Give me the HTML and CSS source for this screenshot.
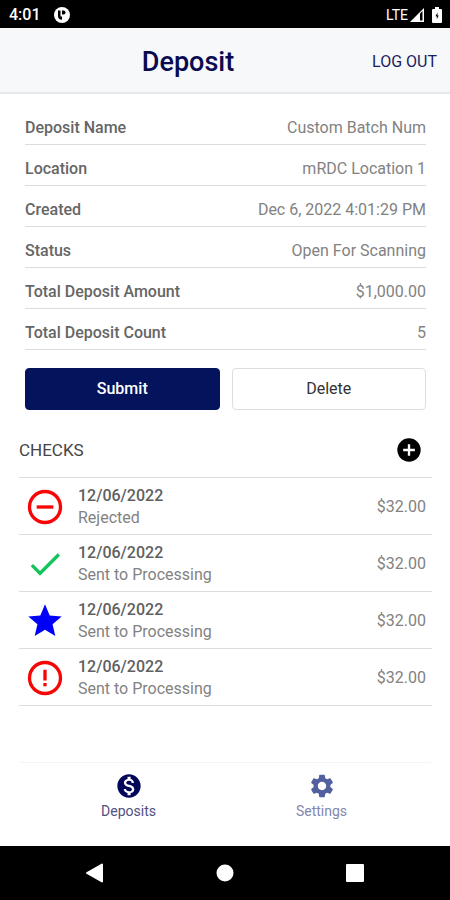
FILE: index.html
```html
<!DOCTYPE html>
<html lang="en">
<head>
<meta charset="utf-8">
<meta name="viewport" content="width=device-width, initial-scale=1">
<title>Deposit</title>
<link rel="stylesheet" href="styles.css">
</head>
<body>
<div class="status-bar">
  <span class="clock">4:01</span>
  <svg class="notice" viewBox="0 0 16 16" aria-hidden="true"><circle cx="8" cy="8" r="8" fill="#fff"/><path d="M4 3.500v5.500a4 4 0 0 0 4 3.800V9.500H6.500v-6z" fill="#000"/><path d="M8 3.500h1.500a2 2 0 0 1 0 4H8z" fill="#000"/></svg>
  <span class="network">LTE</span>
  <svg class="signal" viewBox="0 0 15 14" aria-hidden="true"><path d="M0 14 14 0v14z" fill="#fff"/><path d="M10 5.500 12.500 3v9.500H10z" fill="#000"/></svg>
  <svg class="battery" viewBox="0 0 10 16" aria-hidden="true"><path d="M3 0h4v2h2a1 1 0 0 1 1 1v12a1 1 0 0 1-1 1H1a1 1 0 0 1-1-1V3a1 1 0 0 1 1-1h2z" fill="#fff"/><path d="M5.500 5.500 3.500 9.200h1.300v3L6.700 8.500H5.500z" fill="#000"/></svg>
</div>
<header class="app-bar">
  <h1>Deposit</h1>
  <button class="logout" type="button">LOG OUT</button>
</header>
<main>
  <dl class="details">
    <div class="detail"><dt>Deposit Name</dt><dd>Custom Batch Num</dd></div>
    <div class="detail"><dt>Location</dt><dd>mRDC Location 1</dd></div>
    <div class="detail"><dt>Created</dt><dd>Dec 6, 2022 4:01:29 PM</dd></div>
    <div class="detail"><dt>Status</dt><dd>Open For Scanning</dd></div>
    <div class="detail"><dt>Total Deposit Amount</dt><dd>$1,000.00</dd></div>
    <div class="detail"><dt>Total Deposit Count</dt><dd>5</dd></div>
  </dl>
  <div class="actions">
    <button class="btn primary" type="button">Submit</button>
    <button class="btn" type="button">Delete</button>
  </div>
  <section class="checks">
    <div class="checks-head">
      <h2>CHECKS</h2>
      <button class="add" type="button" aria-label="Add check"><svg viewBox="0 0 24 24"><circle cx="12" cy="12" r="10"/><path d="M12 7v10M7 12h10" stroke="#fff" stroke-width="2"/></svg></button>
    </div>
    <ul>
      <li>
        <svg class="mark" viewBox="0 0 24 24" fill="none" stroke="#f80606" stroke-width="2" aria-hidden="true"><circle cx="12" cy="12" r="9.300"/><path d="M7 12h10"/></svg>
        <div class="info"><strong>12/06/2022</strong><span>Rejected</span></div>
        <span class="amount">$32.00</span>
      </li>
      <li>
        <svg class="mark" viewBox="0 0 24 24" fill="#12c45c" aria-hidden="true"><path d="M9 16.170 4.830 12l-1.420 1.410L9 19 21 7l-1.410-1.410z"/></svg>
        <div class="info"><strong>12/06/2022</strong><span>Sent to Processing</span></div>
        <span class="amount">$32.00</span>
      </li>
      <li>
        <svg class="mark" viewBox="0 0 24 24" fill="#0000fa" aria-hidden="true"><path d="M12 17.270 18.180 21l-1.640-7.030L22 9.240l-7.190-.61L12 2 9.190 8.630 2 9.240l5.460 4.730L5.820 21z"/></svg>
        <div class="info"><strong>12/06/2022</strong><span>Sent to Processing</span></div>
        <span class="amount">$32.00</span>
      </li>
      <li>
        <svg class="mark" viewBox="0 0 24 24" fill="none" stroke="#f80606" stroke-width="2" aria-hidden="true"><circle cx="12" cy="12" r="9.300"/><path d="M12 7v6.500M12 15v2"/></svg>
        <div class="info"><strong>12/06/2022</strong><span>Sent to Processing</span></div>
        <span class="amount">$32.00</span>
      </li>
    </ul>
  </section>
</main>
<nav class="tabs">
  <a class="active" href="#deposits"><svg viewBox="0 0 24 24" aria-hidden="true"><path d="M12 2C6.480 2 2 6.480 2 12s4.480 10 10 10 10-4.480 10-10S17.520 2 12 2zm1.410 16.090V20h-2.670v-1.930c-1.710-.36-3.160-1.460-3.270-3.400h1.960c.1 1.050.82 1.870 2.650 1.870 1.960 0 2.400-.98 2.400-1.590 0-.83-.44-1.610-2.670-2.140-2.480-.6-4.180-1.620-4.180-3.670 0-1.720 1.390-2.840 3.110-3.210V4h2.670v1.950c1.860.45 2.790 1.860 2.850 3.390H14.300c-.05-1.110-.64-1.870-2.220-1.870-1.500 0-2.400.68-2.400 1.640 0 .84.65 1.390 2.670 1.910s4.180 1.390 4.180 3.910c-.01 1.830-1.380 2.830-3.120 3.160z"/></svg>Deposits</a>
  <a href="#settings"><svg viewBox="0 0 24 24" aria-hidden="true"><path d="M19.140 12.940c.04-.3.06-.61.06-.94 0-.32-.02-.64-.07-.94l2.030-1.580c.18-.14.23-.41.12-.61l-1.920-3.320c-.12-.22-.37-.29-.59-.22l-2.390.96c-.5-.38-1.030-.7-1.620-.94l-.36-2.540c-.04-.24-.24-.41-.48-.41h-3.840c-.24 0-.43.17-.47.41l-.36 2.540c-.59.24-1.130.57-1.620.94l-2.390-.96c-.22-.08-.47 0-.59.22L2.740 8.870c-.12.21-.08.47.12.61l2.030 1.580c-.05.3-.09.63-.09.94s.02.64.07.94l-2.030 1.580c-.18.14-.23.41-.12.61l1.920 3.320c.12.22.37.29.59.22l2.390-.96c.5.38 1.030.7 1.620.94l.36 2.540c.05.24.24.41.48.41h3.840c.24 0 .44-.17.47-.41l.36-2.540c.59-.24 1.130-.56 1.620-.94l2.390.96c.22.08.47 0 .59-.22l1.920-3.320c.12-.22.07-.47-.12-.61l-2.010-1.580zM12 15.600c-1.980 0-3.600-1.620-3.600-3.600s1.620-3.600 3.600-3.600 3.600 1.620 3.600 3.600-1.620 3.600-3.600 3.600z"/></svg>Settings</a>
</nav>
<div class="system-nav">
  <button type="button" aria-label="Back"><svg viewBox="0 0 20 20"><path d="M17 1.500v17L2 10z" stroke="#fff" stroke-width="2" stroke-linejoin="round"/></svg></button>
  <button type="button" aria-label="Home"><svg viewBox="0 0 20 20"><circle cx="10" cy="10" r="8.500"/></svg></button>
  <button type="button" aria-label="Recent apps"><svg viewBox="0 0 20 20"><rect x="1" y="1" width="18" height="18" rx="1"/></svg></button>
</div>
</body>
</html>
```
FILE: styles.css
```css
* {
  box-sizing: border-box;
}

body {
  margin: 0;
  min-height: 100vh;
  display: flex;
  flex-direction: column;
  background: #fff;
  color: #828282;
  font: 16px/20px Roboto, sans-serif;
}

h1, h2, dl, dd, ul {
  margin: 0;
  padding: 0;
}

button {
  font: inherit;
  padding: 0;
  border: 0;
  background: none;
}

svg {
  display: block;
}

.status-bar {
  display: flex;
  align-items: center;
  height: 28px;
  padding: 2px 8px 0 9px;
  background: #000;
  color: #fff;
}

.clock {
  font-weight: 500;
}

.notice {
  width: 16px;
  height: 16px;
  margin-left: 13px;
}

.network {
  margin-left: auto;
  font-size: 14px;
}

.signal {
  width: 15px;
  height: 14px;
  margin: 0 7px 0 2px;
}

.battery {
  width: 10px;
  height: 16px;
}

.app-bar {
  display: flex;
  align-items: center;
  height: 66px;
  padding: 3px 13px 0 4px;
  background: #f6f8fa;
  border-bottom: 2px solid #e6e8e9;
  color: #0a0a50;
}

h1 {
  flex: 1;
  text-align: center;
  font-size: 27px;
  line-height: 32px;
  font-weight: 500;
}

.logout {
  color: #1c1c60;
}

main {
  flex: 1;
  padding: 10px 18px 0 19px;
}

.details,
.actions {
  margin: 0 6px;
}

.detail {
  display: flex;
  justify-content: space-between;
  padding: 14px 0 6px;
  border-bottom: 1px solid #dcdcdc;
}

dt {
  font-weight: 500;
  color: #666;
}

.actions {
  display: grid;
  grid-template-columns: 1fr 1fr;
  gap: 12px;
  margin-top: 18px;
}

.btn {
  height: 42px;
  border: 1px solid #dedede;
  border-radius: 4px;
  background: #fff;
  color: #333;
}

.primary {
  border-color: #03145c;
  background: #03145c;
  color: #fff;
  font-weight: 500;
}

.checks-head {
  display: flex;
  justify-content: space-between;
  align-items: center;
  padding: 26px 9px 13px 0;
}

h2 {
  font-size: 17px;
  font-weight: 400;
  color: #444;
}

.add svg {
  width: 28px;
  height: 28px;
}

ul {
  list-style: none;
  border-top: 1px solid #dcdcdc;
}

li {
  display: flex;
  align-items: center;
  padding: 7px 6px 5px;
  border-bottom: 1px solid #dcdcdc;
}

.mark {
  width: 40px;
  height: 40px;
}

.info {
  display: flex;
  flex-direction: column;
  flex: 1;
  margin-left: 13px;
  line-height: 22px;
}

.info strong {
  font-weight: 500;
  color: #606060;
}

.tabs {
  display: grid;
  grid-template-columns: 1fr 1fr;
  margin: 0 19px;
  padding: 9px 13px 25px;
  border-top: 1px solid #f5f5f5;
}

.tabs a {
  display: flex;
  flex-direction: column;
  align-items: center;
  gap: 1px;
  font-size: 14px;
  color: #8288ae;
  text-decoration: none;
}

.tabs svg {
  width: 28px;
  height: 28px;
  fill: #5260a0;
}

.tabs .active {
  color: #505080;
}

.tabs .active svg {
  fill: #03075a;
}

.system-nav {
  display: grid;
  grid-template-columns: repeat(3, 1fr);
  align-items: center;
  justify-items: center;
  height: 54px;
  padding: 0 30px;
  background: #000;
}

.system-nav svg {
  width: 20px;
  height: 20px;
  fill: #fff;
}
```
